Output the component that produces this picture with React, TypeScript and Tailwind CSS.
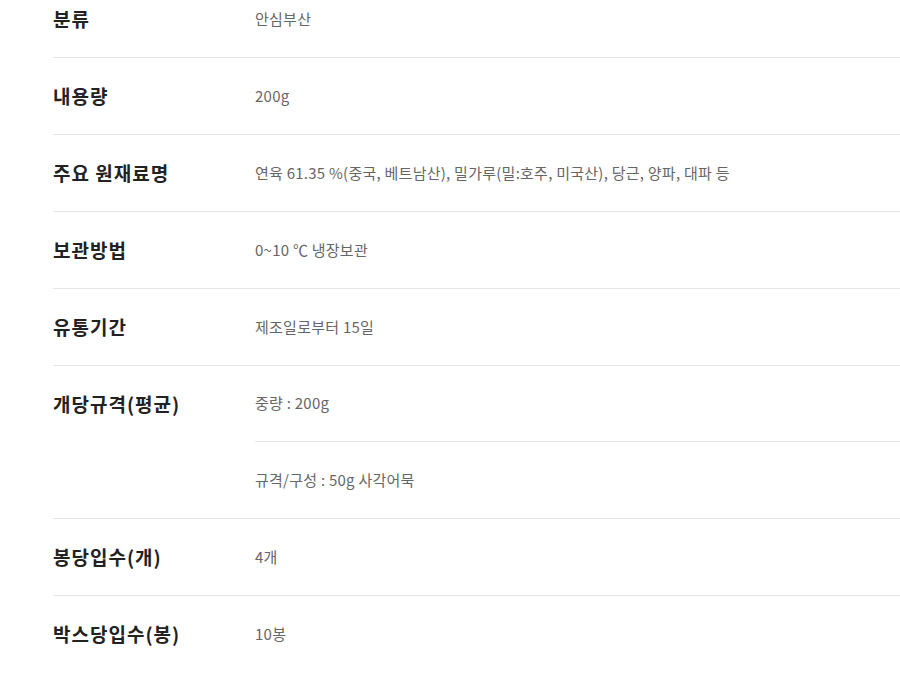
import React from "react";

type Row = { label: string; values: string[] };

const rows: Row[] = [
  { label: "분류", values: ["안심부산"] },
  { label: "내용량", values: ["200g"] },
  {
    label: "주요 원재료명",
    values: ["연육 61.35 %(중국, 베트남산), 밀가루(밀:호주, 미국산), 당근, 양파, 대파 등"],
  },
  { label: "보관방법", values: ["0~10 ℃ 냉장보관"] },
  { label: "유통기간", values: ["제조일로부터 15일"] },
  { label: "개당규격(평균)", values: ["중량 : 200g", "규격/구성 : 50g 사각어묵"] },
  { label: "봉당입수(개)", values: ["4개"] },
  { label: "박스당입수(봉)", values: ["10봉"] },
];

export default function App() {
  return (
    <div
      className="w-[900px] h-[683px] overflow-hidden bg-white"
      style={{ fontFamily: '"Noto Sans CJK KR", "Noto Sans", sans-serif' }}
    >
      <div className="mt-[-19px] ml-[53px]">
        {rows.map((row, i) => (
          <div
            key={row.label}
            className={`flex ${i < rows.length - 1 ? "border-b border-[#e6e6e6]" : ""}`}
          >
            <div className="w-[202px] shrink-0 h-[76px] flex items-center text-[19px] font-bold text-[#222] tracking-[1px]">
              {row.label}
            </div>
            <div className="flex-1 flex flex-col">
              {row.values.map((v, j) => (
                <div
                  key={j}
                  className={`h-[76px] flex items-center text-[15px] text-[#666] tracking-[0.25px] ${
                    j < row.values.length - 1 ? "border-b border-[#e6e6e6]" : ""
                  }`}
                >
                  {v}
                </div>
              ))}
            </div>
          </div>
        ))}
      </div>
    </div>
  );
}
